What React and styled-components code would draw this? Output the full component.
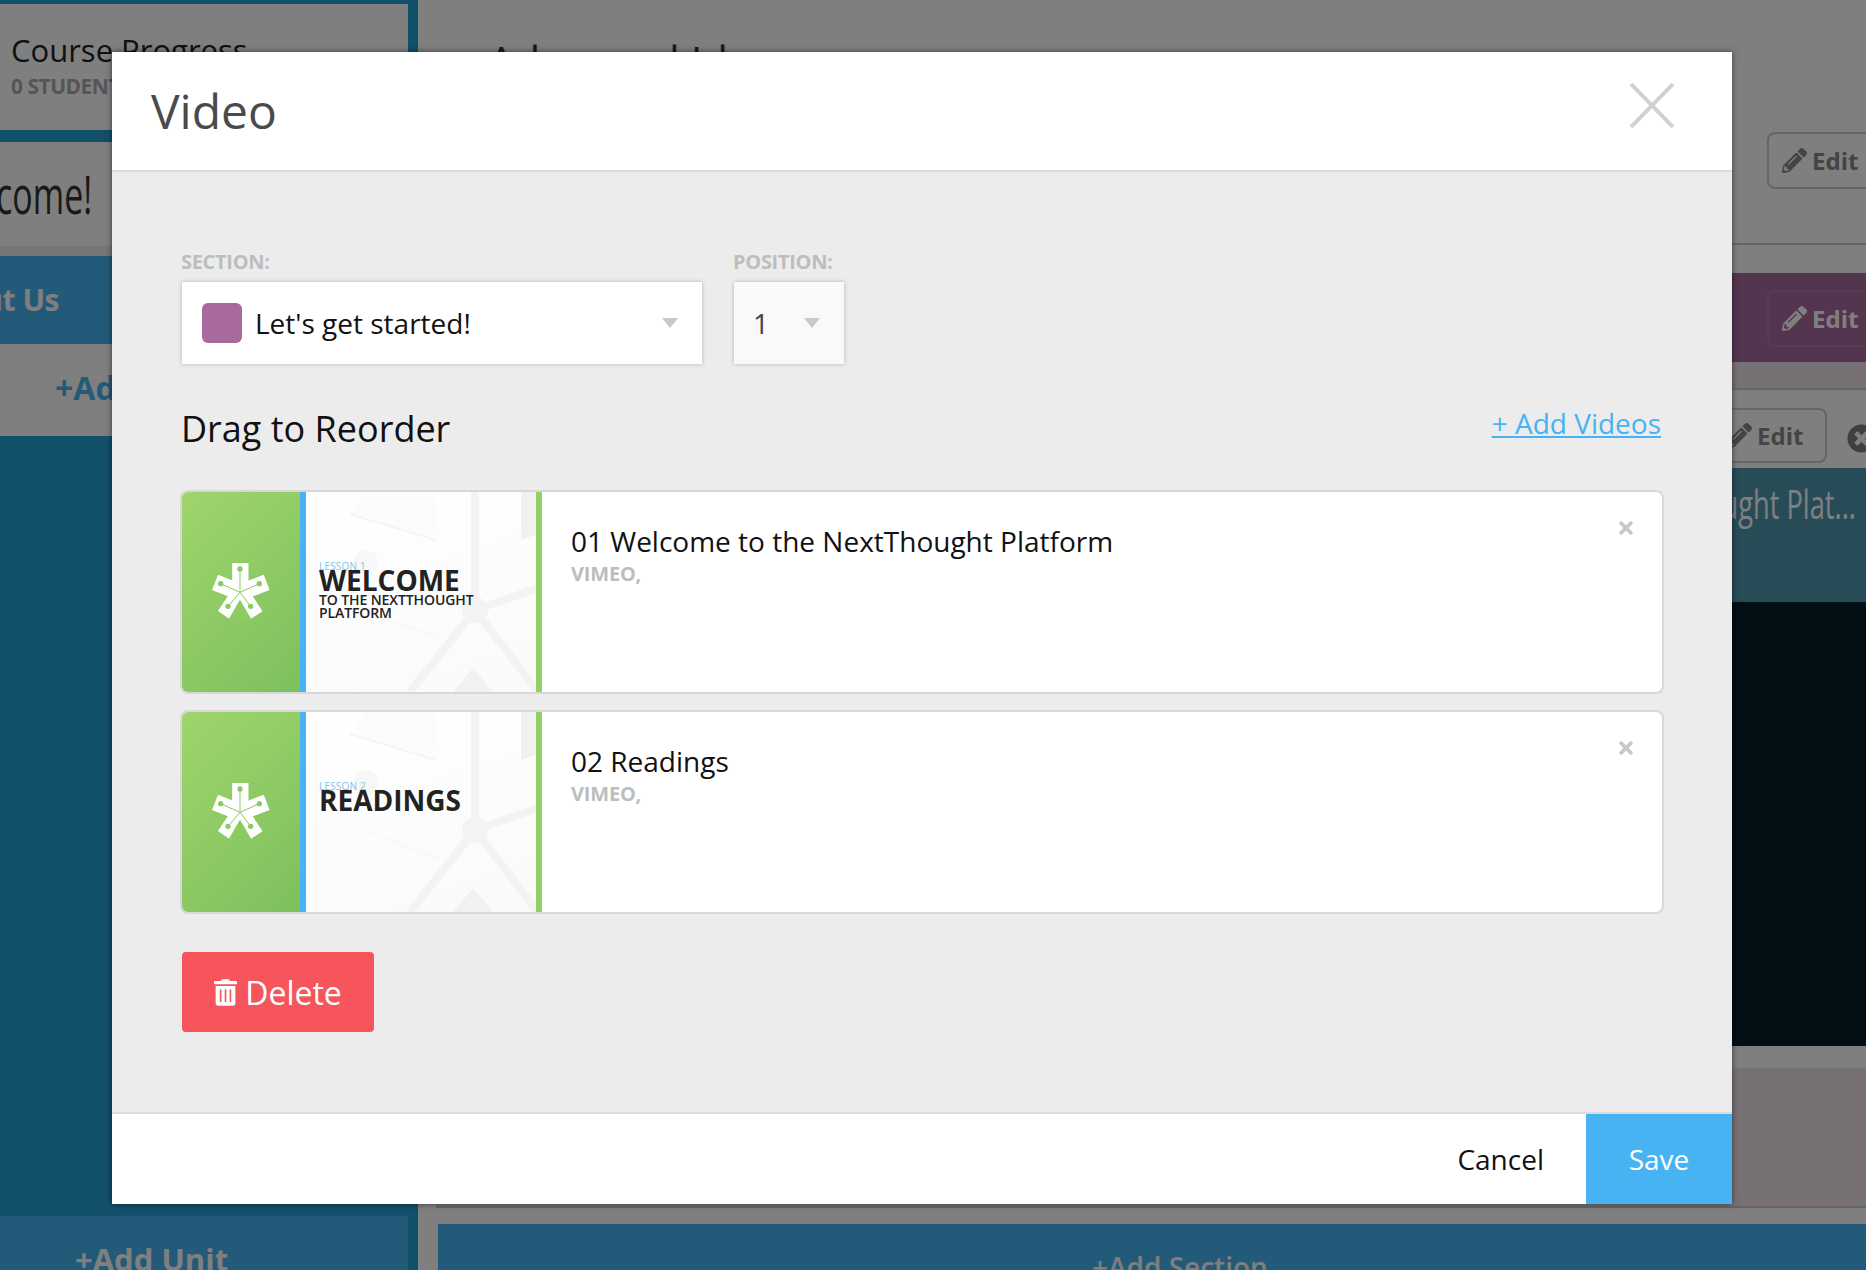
import React from "react";
import styled, { createGlobalStyle } from "styled-components";
import { FaPencilAlt, FaTimes, FaTimesCircle, FaTrashAlt } from "react-icons/fa";

const GlobalStyle = createGlobalStyle`
  html, body {
    margin: 0;
    padding: 0;
    background: #fff;
    font-family: "Open Sans", "Liberation Sans", sans-serif;
  }
  * { box-sizing: border-box; }
`;

/* page behind the dialog */
const Page = styled.div`
  position: relative;
  width: 1866px;
  height: 1270px;
  overflow: hidden;
  display: grid;
  grid-template-columns: 418px 1fr;
`;

const Sidebar = styled.aside`
  background: #24a0d4;
  display: flex;
  flex-direction: column;
  padding: 4px 10px 0 0;
`;

const ProgressCard = styled.div`
  height: 126px;
  background: #fff;
  padding: 24px 0 0 11px;
  margin-bottom: 12px;
`;

const ProgressTitle = styled.div`
  font-size: 31px;
  line-height: 44px;
  color: #222;
`;

const ProgressSub = styled.div`
  margin-top: 2px;
  font-size: 21px;
  line-height: 24px;
  font-weight: 700;
  letter-spacing: -0.5px;
  color: #aaa;
  white-space: nowrap;
`;

const UnitTitle = styled.div`
  height: 104px;
  margin-right: -10px;
  background: #fff;
  display: flex;
  justify-content: flex-end;
  padding-right: 326px;
  font-size: 53px;
  line-height: 104px;
  color: #333;
  white-space: nowrap;
`;

/* the headings use a condensed face, squeezed here since none is installed */
const Condensed = styled.span`
  display: inline-block;
  transform: scaleX(${({ $x }) => $x});
  transform-origin: right center;
`;

const UnitBar = styled.div`
  height: 10px;
  margin-right: -10px;
  background: #eee;
`;

const UnitLink = styled.div`
  height: 88px;
  margin-right: -10px;
  background: #46b4f2;
  color: #fff;
  display: flex;
  justify-content: flex-end;
  padding-right: 359px;
  font-size: 30px;
  font-weight: 700;
  letter-spacing: -0.5px;
  line-height: 88px;
  white-space: nowrap;
`;

const AddLesson = styled.div`
  height: 92px;
  margin-right: -10px;
  background: #fff;
  color: #46b4f2;
  font-size: 32px;
  font-weight: 700;
  line-height: 88px;
  padding-left: 55px;
  white-space: nowrap;
`;

const SideSpacer = styled.div`
  flex: 1;
`;

const AddUnit = styled.div`
  height: 54px;
  background: #46b4f2;
  color: #fff;
  font-size: 31px;
  font-weight: 700;
  line-height: 44px;
  padding: 21px 0 0 75px;
  white-space: nowrap;
  overflow: hidden;
`;

const Main = styled.main`
  background: #fff;
  display: flex;
  flex-direction: column;
  overflow: hidden;
`;

const LessonHead = styled.div`
  height: 245px;
  border-bottom: 2px solid #ccc;
  display: flex;
  justify-content: space-between;
  padding: 132px 0 0 18px;
  flex-shrink: 0;
`;

const LessonTitle = styled.div`
  margin: -99px 0 0 52px;
  font-size: 42px;
  line-height: 56px;
  color: #333;
`;

const EditButton = styled.div`
  flex-shrink: 0;
  width: 115px;
  height: ${({ $h }) => $h || 57}px;
  margin-right: ${({ $mr }) => ($mr === undefined ? -16 : $mr)}px;
  border: 2px solid ${({ $light }) => ($light ? "#b075a8" : "#ccc")};
  border-radius: 8px;
  display: flex;
  align-items: center;
  gap: 5px;
  padding-left: 13px;
  font-size: 24px;
  font-weight: 700;
  color: ${({ $light }) => ($light ? "#fff" : "#888")};
`;

const Pencil = styled(FaPencilAlt)`
  width: 25px;
  height: 25px;
`;

const RemoveCircle = styled(FaTimesCircle)`
  width: 29px;
  height: 29px;
  margin: 16px -10px 0 0;
  color: #7e7e7e;
  flex-shrink: 0;
`;

const SectionBand = styled.div`
  height: 89px;
  margin-top: 28px;
  background: #a86aa0;
  display: flex;
  justify-content: flex-end;
  align-items: flex-start;
  padding-top: 17px;
  flex-shrink: 0;
`;

const TintBand = styled.div`
  height: ${({ $h }) => $h}px;
  margin-left: 18px;
  background: #eee2ea;
  border-bottom: 2px solid #ccc;
  flex-shrink: 0;
`;

const VideoControls = styled.div`
  height: 78px;
  display: flex;
  justify-content: flex-end;
  align-items: flex-start;
  gap: 20px;
  padding-top: 18px;
  flex-shrink: 0;
`;

const VideoTitle = styled.div`
  height: 134px;
  background: #4e98b0;
  color: #fff;
  display: flex;
  justify-content: flex-end;
  font-size: 40px;
  line-height: 72px;
  padding-right: 10px;
  white-space: nowrap;
  flex-shrink: 0;
`;

const VideoFrame = styled.div`
  height: 444px;
  background: #041e28;
  flex-shrink: 0;
`;

const WhiteGap = styled.div`
  height: ${({ $h }) => $h}px;
  flex-shrink: 0;
`;

const AddSection = styled.div`
  flex: 1;
  margin-left: 20px;
  background: #46b4f2;
  color: #fff;
  font-size: 28px;
  font-weight: 600;
  line-height: 42px;
  padding: 22px 0 0 654px;
  white-space: nowrap;
  overflow: hidden;
`;

const Overlay = styled.div`
  position: absolute;
  inset: 0;
  background: rgba(0, 0, 0, 0.5);
`;

/* dialog */
const Modal = styled.div`
  position: absolute;
  left: 112px;
  top: 52px;
  width: 1620px;
  height: 1152px;
  display: flex;
  flex-direction: column;
  background: #ececec;
  box-shadow: 0 0 6px rgba(0, 0, 0, 0.55);
`;

const ModalHeader = styled.header`
  height: 120px;
  background: #fff;
  border-bottom: 2px solid #dcdcdc;
  display: flex;
  align-items: center;
  justify-content: space-between;
  padding: 0 58px 11px 39px;
  flex-shrink: 0;
`;

const ModalTitle = styled.h1`
  margin: 10px 0 0;
  font-size: 48px;
  font-weight: 400;
  line-height: 66px;
  color: #4a4a4a;
`;

const ModalBody = styled.div`
  flex: 1;
  padding: 77px 68px 0 69px;
  display: flex;
  flex-direction: column;
`;

const FieldRow = styled.div`
  display: flex;
  gap: 31px;
`;

const Field = styled.div`
  display: flex;
  flex-direction: column;
`;

const FieldLabel = styled.label`
  font-size: 20px;
  line-height: 26px;
  font-weight: 700;
  color: #bdbdbd;
  margin-bottom: 7px;
  letter-spacing: -0.3px;
`;

const Select = styled.div`
  width: ${({ $w }) => $w}px;
  height: 82px;
  margin-left: 1px;
  background: ${({ $muted }) => ($muted ? "#f9f9f9" : "#fff")};
  box-shadow: 0 0 4px rgba(0, 0, 0, 0.25);
  display: flex;
  align-items: center;
  padding: 0 24px 0 ${({ $muted }) => ($muted ? 19 : 20)}px;
  font-size: 28px;
  color: ${({ $muted }) => ($muted ? "#444" : "#111")};
`;

const Swatch = styled.span`
  width: 40px;
  height: 40px;
  border-radius: 6px;
  background: #a86a9c;
  margin-right: 13px;
`;

const Arrow = styled.span`
  margin-left: auto;
  border-left: 8px solid transparent;
  border-right: 8px solid transparent;
  border-top: 10px solid #c8c8c8;
`;

const ListHeader = styled.div`
  display: flex;
  justify-content: space-between;
  align-items: center;
  margin-top: 34px;
  height: 60px;
`;

const ListTitle = styled.h2`
  margin: 0;
  font-size: 36px;
  font-weight: 400;
  color: #111;
`;

const AddVideos = styled.a`
  font-size: 28px;
  color: #47b3f3;
  text-decoration: underline;
  margin: -10px 3px 0 0;
`;

const VideoList = styled.div`
  display: flex;
  flex-direction: column;
  gap: 16px;
  margin: 32px 0 0 -1px;
`;

const VideoRow = styled.div`
  height: 204px;
  border: 2px solid #d8d8d8;
  border-radius: 8px;
  background: #fff;
  overflow: hidden;
  display: flex;
`;

const Brand = styled.div`
  width: 118px;
  background: linear-gradient(135deg, #9fd56b 0%, #7dc05e 100%);
  display: flex;
  align-items: center;
  justify-content: center;
  padding: 0 0 3px 1px;
  flex-shrink: 0;
`;

const Thumb = styled.div`
  position: relative;
  width: 242px;
  background: linear-gradient(160deg, #fff, #fafafa);
  border-left: 6px solid #47b3f3;
  border-right: 6px solid #93cf62;
  padding: 69px 0 0 13px;
  flex-shrink: 0;
  color: #222;
  overflow: hidden;
`;

const ThumbArt = styled.svg`
  position: absolute;
  left: 0;
  top: 0;
  width: 230px;
  height: 200px;
`;

const ThumbText = styled.div`
  position: relative;
  display: flex;
  flex-direction: column;
`;

const ThumbLesson = styled.span`
  font-size: 10px;
  line-height: 10px;
  color: #7cc4ec;
  letter-spacing: 0.2px;
`;

const ThumbHead = styled.span`
  margin-top: -5px;
  font-size: 28px;
  line-height: 28px;
  font-weight: 700;
`;

const ThumbSub = styled.span`
  font-size: 14px;
  line-height: 12.5px;
  font-weight: 600;
  letter-spacing: -0.1px;
`;

const VideoInfo = styled.div`
  flex: 1;
  padding: 30px 0 0 29px;
`;

const VideoName = styled.div`
  font-size: 28px;
  line-height: 38px;
  color: #111;
`;

const VideoMeta = styled.div`
  margin-top: 1px;
  font-size: 20px;
  line-height: 26px;
  font-weight: 700;
  color: #bdbdbd;
  letter-spacing: -0.2px;
`;

const RemoveIcon = styled(FaTimes)`
  width: 16px;
  height: 20px;
  margin: 26px 28px 0 0;
  color: #c8c8c8;
  flex-shrink: 0;
`;

const DeleteButton = styled.button`
  align-self: flex-start;
  width: 192px;
  height: 80px;
  margin: 38px 0 0 1px;
  border: 0;
  border-radius: 4px;
  background: #f5555b;
  color: #fff;
  font-family: inherit;
  font-size: 32px;
  display: flex;
  align-items: center;
  justify-content: center;
  gap: 8px;

  svg {
    width: 23px;
    height: 27px;
  }
`;

const ModalFooter = styled.footer`
  height: 92px;
  background: #fff;
  border-top: 2px solid #dcdcdc;
  display: flex;
  justify-content: flex-end;
  font-size: 28px;
  flex-shrink: 0;
`;

const CancelButton = styled.div`
  align-self: center;
  margin-right: 42px;
  color: #111;
`;

const SaveButton = styled.div`
  width: 146px;
  background: #47b3f3;
  color: #fff;
  display: flex;
  align-items: center;
  justify-content: center;
`;

const Logo = () => (
  <svg width="75" height="75" viewBox="0 0 225 225">
    <g stroke="#fff" strokeWidth="49" fill="none">
      <line x1="109" y1="118" x2="109" y2="30" />
      <line x1="109" y1="118" x2="188" y2="88" />
      <line x1="109" y1="118" x2="155" y2="188" />
      <line x1="109" y1="118" x2="62" y2="188" />
      <line x1="109" y1="118" x2="33" y2="88" />
    </g>
    <path d="M108 140 L72 202 H144 Z" fill="#8cca62" />
    <g stroke="#8cca62" strokeWidth="3" fill="none">
      <path d="M108 118 V48" />
      <path d="M108 118 L166 92" />
      <path d="M108 118 L140 160" />
      <path d="M108 118 L72 160" />
      <path d="M108 118 L50 92" />
    </g>
    <g fill="#8cca62">
      <circle cx="108" cy="48" r="8" />
      <circle cx="166" cy="92" r="8" />
      <circle cx="140" cy="160" r="8" />
      <circle cx="72" cy="160" r="8" />
      <circle cx="50" cy="92" r="8" />
    </g>
  </svg>
);

const ThumbBackground = () => (
  <ThumbArt viewBox="0 0 230 200">
    <g stroke="#f3f3f3" strokeWidth="8" fill="none">
      <path d="M169 0 V112" />
      <path d="M169 118 L104 200" />
      <path d="M169 118 L232 200" />
      <path d="M169 118 L232 96" />
    </g>
    <circle cx="169" cy="118" r="13" fill="#f3f3f3" />
    <circle cx="60" cy="70" r="12" fill="#f7f7f7" />
    <path d="M167 176 L147 200 H187 Z" fill="#f1f1f1" />
    <path d="M215 0 H232 V42 L215 48 Z" fill="#f1f1f1" />
    <path d="M44 22 L130 48 V0 H60 Z" fill="#fcfcfc" />
    <path d="M130 48 L44 22" stroke="#f5f5f5" strokeWidth="2" />
    <path d="M60 120 L134 146" stroke="#f8f8f8" strokeWidth="2" />
  </ThumbArt>
);

const videos = [
  {
    name: "01 Welcome to the NextThought Platform",
    lesson: "LESSON 1",
    head: "WELCOME",
    sub: ["TO THE NEXTTHOUGHT", "PLATFORM"],
  },
  { name: "02 Readings", lesson: "LESSON 2", head: "READINGS", sub: [] },
];

export default function App() {
  return (
    <>
      <GlobalStyle />
      <Page>
        <Sidebar>
          <ProgressCard>
            <ProgressTitle>Course Progress</ProgressTitle>
            <ProgressSub>0 STUDENTS</ProgressSub>
          </ProgressCard>
          <UnitTitle>
            <Condensed $x={0.64}>Welcome!</Condensed>
          </UnitTitle>
          <UnitBar />
          <UnitLink>About Us</UnitLink>
          <AddLesson>+Add Lesson</AddLesson>
          <SideSpacer />
          <AddUnit>+Add Unit</AddUnit>
        </Sidebar>
        <Main>
          <LessonHead>
            <LessonTitle>Advanced Ideas</LessonTitle>
            <EditButton>
              <Pencil />
              Edit
            </EditButton>
          </LessonHead>
          <SectionBand>
            <EditButton $light>
              <Pencil />
              Edit
            </EditButton>
          </SectionBand>
          <TintBand $h={28} />
          <VideoControls>
            <EditButton $mr={0} $h={55}>
              <Pencil />
              Edit
            </EditButton>
            <RemoveCircle />
          </VideoControls>
          <VideoTitle>
            <Condensed $x={0.68}>Welcome to the NextThought Plat...</Condensed>
          </VideoTitle>
          <VideoFrame />
          <WhiteGap $h={22} />
          <TintBand $h={140} />
          <WhiteGap $h={16} />
          <AddSection>+Add Section</AddSection>
        </Main>
        <Overlay />
        <Modal>
          <ModalHeader>
            <ModalTitle>Video</ModalTitle>
            <svg width="44" height="45" viewBox="0 0 44 45">
              <path d="M1 1 L43 44 M43 1 L1 44" stroke="#d0d0d0" strokeWidth="4" fill="none" />
            </svg>
          </ModalHeader>
          <ModalBody>
            <FieldRow>
              <Field>
                <FieldLabel>SECTION:</FieldLabel>
                <Select $w={520}>
                  <Swatch />
                  Let's get started!
                  <Arrow />
                </Select>
              </Field>
              <Field>
                <FieldLabel>POSITION:</FieldLabel>
                <Select $w={110} $muted>
                  1
                  <Arrow />
                </Select>
              </Field>
            </FieldRow>
            <ListHeader>
              <ListTitle>Drag to Reorder</ListTitle>
              <AddVideos href="#">+ Add Videos</AddVideos>
            </ListHeader>
            <VideoList>
              {videos.map((v) => (
                <VideoRow key={v.name}>
                  <Brand>
                    <Logo />
                  </Brand>
                  <Thumb>
                    <ThumbBackground />
                    <ThumbText>
                      <ThumbLesson>{v.lesson}</ThumbLesson>
                      <ThumbHead>{v.head}</ThumbHead>
                      {v.sub.map((line) => (
                        <ThumbSub key={line}>{line}</ThumbSub>
                      ))}
                    </ThumbText>
                  </Thumb>
                  <VideoInfo>
                    <VideoName>{v.name}</VideoName>
                    <VideoMeta>VIMEO,</VideoMeta>
                  </VideoInfo>
                  <RemoveIcon />
                </VideoRow>
              ))}
            </VideoList>
            <DeleteButton>
              <FaTrashAlt />
              Delete
            </DeleteButton>
          </ModalBody>
          <ModalFooter>
            <CancelButton>Cancel</CancelButton>
            <SaveButton>Save</SaveButton>
          </ModalFooter>
        </Modal>
      </Page>
    </>
  );
}
